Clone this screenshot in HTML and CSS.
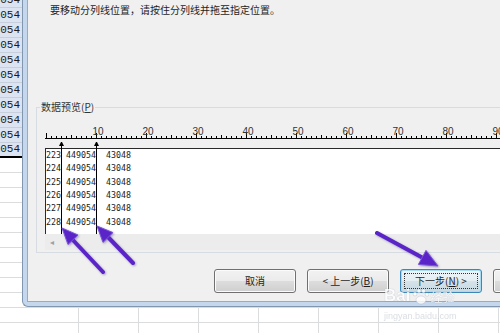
FILE: index.html
```html
<!DOCTYPE html>
<html lang="zh-CN">
<head>
    <meta charset="UTF-8">
    <title>文本分列向导</title>
    <link rel="stylesheet" href="styles.css">
</head>
<body>
    <div class="sheet">
        <div class="col-a">
            <div class="cell">449054</div>
            <div class="cell">449054</div>
            <div class="cell">449054</div>
            <div class="cell">449054</div>
            <div class="cell">449054</div>
            <div class="cell">449054</div>
            <div class="cell">449054</div>
            <div class="cell">449054</div>
            <div class="cell">449054</div>
            <div class="cell">449054</div>
            <div class="cell last">449054</div>
            <div class="col-a-rest"></div>
        </div>
        <div class="cols"></div>
    </div>

    <div class="dialog">
        <div class="dialog-body">
            <p class="hint">要移动分列线位置，请按住分列线并拖至指定位置。</p>
            <fieldset class="group">
                <legend>数据预览(<u>P</u>)</legend>
                <svg class="ruler" width="470" height="14" viewBox="0 0 470 14">
                    <defs>
                        <pattern id="ticks" x="1" y="0" width="50" height="14" patternUnits="userSpaceOnUse">
                            <rect x="0" y="7" width="1" height="5"/>
                            <rect x="5" y="10" width="1" height="2"/>
                            <rect x="10" y="10" width="1" height="2"/>
                            <rect x="15" y="10" width="1" height="2"/>
                            <rect x="20" y="10" width="1" height="2"/>
                            <rect x="25" y="9" width="1" height="3"/>
                            <rect x="30" y="10" width="1" height="2"/>
                            <rect x="35" y="10" width="1" height="2"/>
                            <rect x="40" y="10" width="1" height="2"/>
                            <rect x="45" y="10" width="1" height="2"/>
                        </pattern>
                    </defs>
                    <rect x="0" y="0" width="470" height="14" fill="url(#ticks)"/>
                    <rect x="0" y="12" width="470" height="1"/>
                    <g class="ruler-nums">
                        <text x="53" y="9">10</text>
                        <text x="103" y="9">20</text>
                        <text x="153" y="9">30</text>
                        <text x="203" y="9">40</text>
                        <text x="253" y="9">50</text>
                        <text x="303" y="9">60</text>
                        <text x="353" y="9">70</text>
                        <text x="403" y="9">80</text>
                        <text x="453" y="9">90</text>
                    </g>
                </svg>
                <div class="preview">
                    <div class="preview-text">
                        <div class="row">223 449054  43048</div>
                        <div class="row">224 449054  43048</div>
                        <div class="row">225 449054  43048</div>
                        <div class="row">226 449054  43048</div>
                        <div class="row">227 449054  43048</div>
                        <div class="row">228 449054  43048</div>
                        <span class="colbreak cb-1"></span>
                        <span class="colbreak cb-2"></span>
                    </div>
                    <div class="hscroll">◂</div>
                </div>
            </fieldset>
            <div class="buttons">
                <button class="btn">取消</button>
                <button class="btn">&lt; 上一步(<u>B</u>)</button>
                <button class="btn btn-default">下一步(<u>N</u>) &gt;</button>
                <button class="btn">完成(<u>F</u>)</button>
            </div>
        </div>
    </div>

    <svg class="marks" width="500" height="333" viewBox="0 0 500 333">
        <g class="arrow">
            <line x1="103" y1="272" x2="71" y2="238"/>
            <polygon points="62,228 78,235 68,244.5"/>
        </g>
        <g class="arrow">
            <line x1="133" y1="263" x2="107" y2="236"/>
            <polygon points="97,226 113,232.6 103,242.4"/>
        </g>
        <g class="arrow">
            <line x1="377" y1="233" x2="424" y2="258.5"/>
            <polygon points="438,266 418.4,264.4 426,250.4"/>
        </g>
    </svg>

    <div class="watermark">
        <div class="wm-logo">
            <span class="wm-bai">Bai</span>
            <svg class="wm-paw" width="18" height="17" viewBox="0 0 18 17">
                <circle cx="4" cy="6" r="2"/>
                <circle cx="8" cy="3" r="2"/>
                <circle cx="12.5" cy="3" r="2"/>
                <circle cx="16" cy="6.5" r="1.8"/>
                <ellipse cx="10" cy="12" rx="5" ry="4"/>
            </svg>
            <span class="wm-jy">经验</span>
        </div>
        <div class="wm-url">jingyan.baidu.com</div>
    </div>
</body>
</html>
```

FILE: styles.css
```css
* {
    box-sizing: border-box;
}

html, body {
    margin: 0;
    padding: 0;
}

body {
    position: relative;
    width: 500px;
    height: 333px;
    overflow: hidden;
    background-color: #fff;
    font-family: "Noto Sans CJK SC", sans-serif;
}

/* spreadsheet behind the dialog */
.sheet {
    display: flex;
    height: 340px;
    margin-top: -7px;
}

.col-a {
    width: 78px;
    display: flex;
    flex-direction: column;
}

.cell {
    height: 15px;
    flex: none;
    display: flex;
    justify-content: flex-end;
    align-items: flex-end;
    padding-right: 58px;
    overflow: hidden;
    border-bottom: 1px solid #c7cfdd;
    background-color: #dce3f1;
    font: 11px/13px "Liberation Mono", monospace;
    color: #1a1a1a;
}

.cell.last {
    border-bottom: 2px solid #000;
}

.col-a-rest {
    flex: 1;
    background: repeating-linear-gradient(to bottom, transparent 0 14px, #dadcdd 14px 15px);
}

.cols {
    flex: 1;
    background-image:
        linear-gradient(to right, #dadcdd 1px, transparent 1px),
        linear-gradient(to top, #dadcdd 1px, transparent 1px);
    background-size: 60px 15px;
}

/* dialog window */
.dialog {
    position: absolute;
    top: 0;
    left: 22px;
    width: 568px;
    padding: 0 0 4px 4px;
    border-left: 1px solid #8197b0;
    border-bottom: 1px solid #8197b0;
    border-bottom-left-radius: 6px;
    background-color: #c4d7ed;
}

.dialog-body {
    padding: 3px 15px 8px 8px;
    border-left: 1px solid #9aabbe;
    border-bottom: 1px solid #9aabbe;
    background-color: #f0f0f0;
}

.hint {
    margin: 0 0 0 14px;
    font-size: 10px;
    line-height: 14px;
    color: #1e1e1e;
}

.group {
    margin: 83px 0 0 0;
    padding: 12px 0 2px 8px;
    border: 1px solid #d6dce1;
    min-width: 0;
}

.group legend {
    margin-left: -5px;
    padding: 0 1px;
    font-size: 10px;
    line-height: 14px;
    color: #333;
}

.ruler {
    display: block;
    fill: #000;
}

.ruler-nums text {
    font: 10px "Liberation Sans", sans-serif;
    fill: #333;
    text-anchor: middle;
}

.preview {
    margin-top: 8px;
}

.preview-text {
    position: relative;
    padding-bottom: 5px;
    border-top: 1px solid #2a2a2a;
    border-left: 1px solid #2a2a2a;
    background-color: #fff;
    font: 8.3px/13.33px "DejaVu Sans Mono", monospace;
    color: #222;
}

.row {
    height: 13.33px;
    white-space: pre;
}

.colbreak {
    position: absolute;
    top: -7px;
    bottom: 0;
    width: 1px;
    background-color: #000;
}

.colbreak::before {
    content: "";
    position: absolute;
    top: 0;
    left: -2px;
    width: 1px;
    border-left: 2px solid transparent;
    border-right: 2px solid transparent;
    border-bottom: 4px solid #000;
}

.cb-1 {
    left: 15px;
}

.cb-2 {
    left: 50px;
}

.hscroll {
    height: 16px;
    padding-left: 5px;
    background-color: #ececec;
    font-size: 8px;
    line-height: 16px;
    color: #a0a0a0;
}

.buttons {
    display: flex;
    justify-content: flex-end;
    gap: 11px;
    margin-top: 16px;
}

.btn {
    width: 82px;
    height: 24px;
    padding: 0;
    border: 1px solid #707070;
    border-radius: 3px;
    background: linear-gradient(#f2f2f2, #ebebeb 50%, #dddddd 50%, #cfcfcf);
    box-shadow: inset 0 0 0 1px #fbfbfb;
    font: 10px/1 "Noto Sans CJK SC", sans-serif;
    color: #1e1e1e;
}

.btn-default {
    position: relative;
    border-color: #3c87b8;
    background: linear-gradient(#eef5f8, #e3edf2 50%, #d5e3ea 50%, #c8d9e2);
    box-shadow: inset 0 0 0 1px #a9dcf3;
}

.btn-default::after {
    content: "";
    position: absolute;
    top: 3px;
    right: 3px;
    bottom: 3px;
    left: 3px;
    border: 1px dotted #333;
}

/* purple callout arrows drawn over the screenshot */
.marks {
    position: absolute;
    top: 0;
    left: 0;
}

.arrow {
    filter: drop-shadow(1px 1px 1px rgba(70, 50, 130, 0.45));
}

.arrow line {
    stroke: #5a24c8;
    stroke-width: 4;
    stroke-linecap: round;
}

.arrow polygon {
    fill: #5a24c8;
    stroke: #7a55d8;
    stroke-width: 1;
    stroke-linejoin: round;
}

/* watermark */
.watermark {
    position: absolute;
    top: 287px;
    left: 384px;
    opacity: 0.8;
}

.wm-logo {
    display: flex;
    align-items: flex-end;
    gap: 1px;
}

.wm-bai {
    font: bold 17px/18px "Liberation Sans", sans-serif;
    color: #fff;
    text-shadow: 0 0 1px rgba(80, 100, 130, 0.6);
}

.wm-paw {
    fill: #fff;
    stroke: rgba(80, 100, 130, 0.35);
    stroke-width: 0.6;
}

.wm-jy {
    font-size: 12px;
    line-height: 16px;
    color: #fff;
    text-shadow: 0 0 1px rgba(80, 100, 130, 0.6);
}

.wm-url {
    margin-top: 6px;
    font: 9px "Liberation Sans", sans-serif;
    color: rgba(170, 178, 190, 0.55);
}
```
